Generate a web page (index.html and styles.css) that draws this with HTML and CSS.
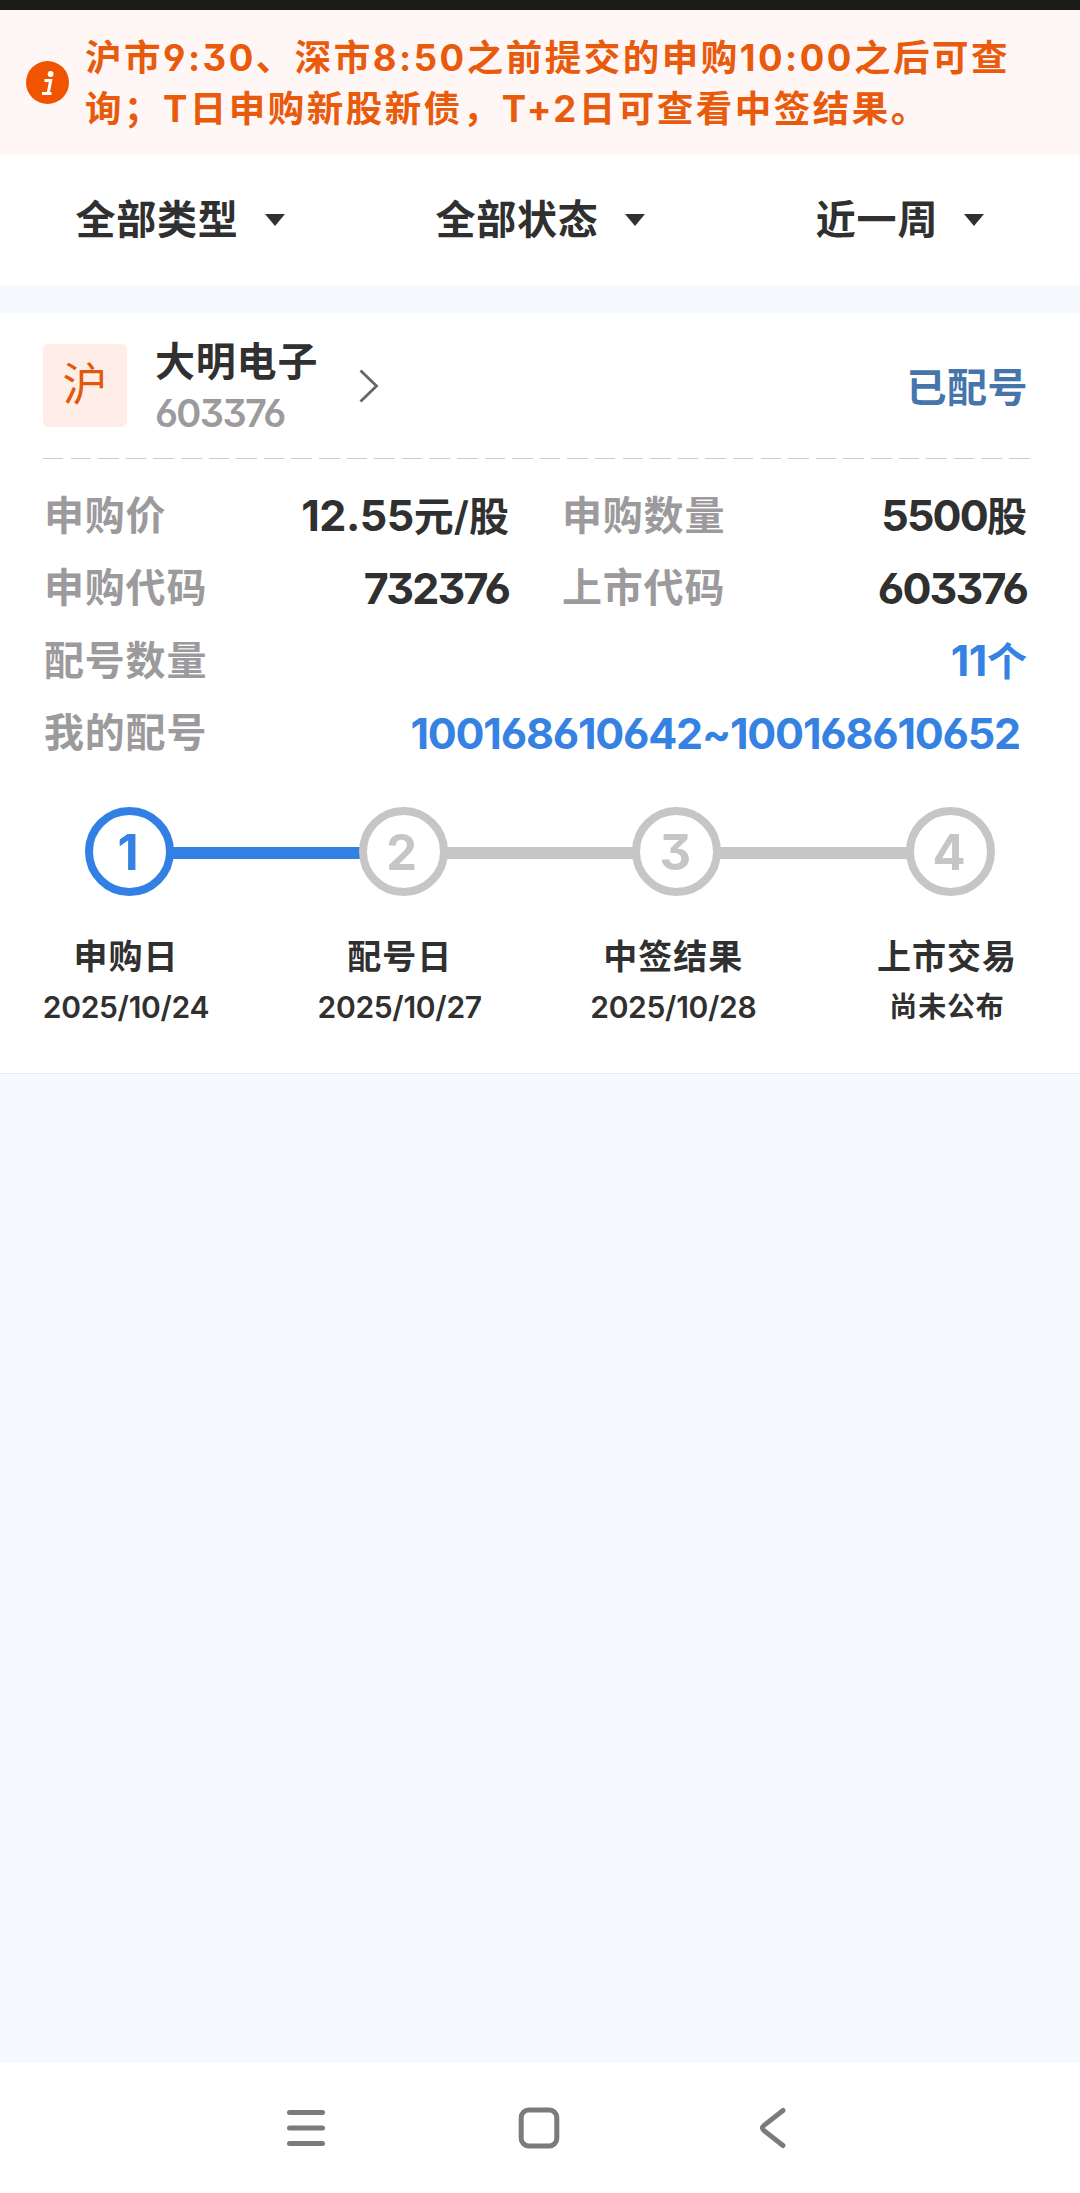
FILE: index.html
```html
<!DOCTYPE html>
<html lang="zh-CN">
<head>
    <meta charset="UTF-8">
    <meta name="viewport" content="width=device-width, initial-scale=1.0">
    <title>申购查询</title>
    <link rel="stylesheet" href="styles.css">
</head>
<body>
    <div class="status-bar"></div>

    <div class="notice">
        <svg class="notice-icon" viewBox="0 0 43 43">
            <circle cx="21.5" cy="21.5" r="21.5" fill="#f05400"/>
            <circle cx="24.6" cy="13" r="2.9" fill="#fff"/>
            <path d="M18.5 19.6h6.2l-2.6 13M16 32.6h9.5" fill="none" stroke="#fff" stroke-width="3"/>
        </svg>
        <p class="notice-text">沪市9:30、深市8:50之前提交的申购10:00之后可查<br>询；T日申购新股新债，T+2日可查看中签结果。</p>
    </div>

    <div class="filters">
        <div class="filter">全部类型<span class="arrow"></span></div>
        <div class="filter">全部状态<span class="arrow"></span></div>
        <div class="filter">近一周<span class="arrow"></span></div>
    </div>

    <main>
        <section class="card">
            <div class="stock">
                <div class="market">沪</div>
                <div class="stock-info">
                    <div class="stock-name">大明电子</div>
                    <div class="stock-code">603376</div>
                </div>
                <svg class="chevron" viewBox="0 0 20 34">
                    <path d="M1.5 1.5L17.5 17L1.5 32.5" fill="none" stroke="#666" stroke-width="2.8"/>
                </svg>
                <div class="stock-status">已配号</div>
            </div>

            <div class="divider"></div>

            <div class="details">
                <div class="row">
                    <span class="label">申购价</span>
                    <span class="value mixed"><span class="num">12.55</span>元/股</span>
                </div>
                <div class="row">
                    <span class="label">申购数量</span>
                    <span class="value"><span class="num">5500</span>股</span>
                </div>
                <div class="row">
                    <span class="label">申购代码</span>
                    <span class="value num">732376</span>
                </div>
                <div class="row">
                    <span class="label">上市代码</span>
                    <span class="value num">603376</span>
                </div>
                <div class="row wide">
                    <span class="label">配号数量</span>
                    <span class="value mixed link"><span class="num">11</span>个</span>
                </div>
                <div class="row wide">
                    <span class="label">我的配号</span>
                    <span class="value link num numbers">100168610642~100168610652</span>
                </div>
            </div>

            <div class="progress">
                <span class="circle active">1</span>
                <span class="line active"></span>
                <span class="circle">2</span>
                <span class="line"></span>
                <span class="circle">3</span>
                <span class="line"></span>
                <span class="circle">4</span>
            </div>

            <div class="steps">
                <div class="step">
                    <div class="step-name">申购日</div>
                    <div class="step-date">2025/10/24</div>
                </div>
                <div class="step">
                    <div class="step-name">配号日</div>
                    <div class="step-date">2025/10/27</div>
                </div>
                <div class="step">
                    <div class="step-name">中签结果</div>
                    <div class="step-date">2025/10/28</div>
                </div>
                <div class="step">
                    <div class="step-name">上市交易</div>
                    <div class="step-date pending">尚未公布</div>
                </div>
            </div>
        </section>
    </main>

    <nav class="nav-bar">
        <svg viewBox="0 0 44 44">
            <path d="M5.5 6.5h33M5.5 22h33M5.5 37.5h33"/>
        </svg>
        <svg viewBox="0 0 44 44">
            <rect x="4.2" y="4" width="35.6" height="36" rx="7.5"/>
        </svg>
        <svg viewBox="0 0 44 44">
            <path d="M33 4.5L14 19.4q-3.2 2.6 0 5.2L33 39.5"/>
        </svg>
    </nav>
</body>
</html>
```

FILE: styles.css
```css
* {
    box-sizing: border-box;
}
body {
    margin: 0;
    min-height: 2193px;
    display: flex;
    flex-direction: column;
    font-family: Inter, "Noto Sans CJK SC", sans-serif;
    font-feature-settings: "cv03", "cv04", "cv09";
    font-weight: 600;
    background: #f6faff;
    color: #303030;
    white-space: nowrap;
}
.status-bar {
    height: 10px;
    background: #191c19;
}
.notice {
    height: 145px;
    display: flex;
    padding: 23px 0 0 26px;
    background: #fff6f6;
    color: #e85a0c;
}
.notice-icon {
    width: 43px;
    height: 43px;
    margin: 28px 16px 0 0;
}
.notice-text {
    margin: 0;
    font-size: 36.5px;
    font-weight: 700;
    line-height: 51px;
    letter-spacing: 2.5px;
}
.filters {
    height: 130px;
    display: grid;
    grid-template-columns: repeat(3, 1fr);
    background: #fff;
}
.filter {
    display: flex;
    align-items: center;
    justify-content: center;
    padding-bottom: 6px;
    font-size: 40px;
    letter-spacing: 0.8px;
}
.arrow {
    margin: 6px 0 0 26px;
    border: 10px solid transparent;
    border-top: 12px solid #303030;
    border-bottom: 0;
}
main {
    flex: 1;
    padding-top: 28px;
}
.card {
    height: 761px;
    padding-top: 24px;
    background: #fff;
    border-bottom: 1px solid #ebebef;
}
.stock {
    display: flex;
    align-items: center;
    height: 97px;
    margin: 0 52px 0 43px;
}
.market {
    width: 84px;
    height: 83px;
    border-radius: 6px;
    background: #ffeee7;
    color: #e0570d;
    font-size: 45px;
    font-weight: 400;
    line-height: 82px;
    text-align: center;
}
.stock-info {
    margin-left: 28px;
    padding-top: 5px;
}
.stock-name {
    font-size: 40px;
    line-height: 50px;
    letter-spacing: 0.8px;
}
.stock-code {
    font-size: 38px;
    line-height: 52px;
    letter-spacing: -1.6px;
    color: #9c9a9c;
}
.chevron {
    width: 20px;
    height: 34px;
    margin-left: 41px;
}
.stock-status {
    margin-left: auto;
    padding-bottom: 1px;
    font-size: 40px;
    letter-spacing: 0.5px;
    color: #4675ab;
}
.divider {
    height: 1px;
    margin: 24px 50px 0 43px;
    background: repeating-linear-gradient(to right, #ccc 0 20.5px, transparent 20.5px 27.6px);
}
.details {
    display: grid;
    grid-template-columns: 465px 465px;
    column-gap: 53px;
    grid-auto-rows: 72.3px;
    margin: 21px 52px 0 44px;
    font-size: 40px;
    line-height: 60px;
}
.row {
    display: flex;
    align-items: center;
    justify-content: space-between;
}
.wide {
    grid-column: span 2;
}
.label {
    color: #9c9a9c;
    letter-spacing: 0.8px;
}
.link {
    color: #3682e2;
}
.num {
    font-size: 43px;
    font-weight: 700;
    letter-spacing: -1.8px;
}
.mixed .num {
    letter-spacing: -0.4px;
}
.numbers {
    margin-right: 7px;
    letter-spacing: -1.2px;
}
.progress {
    display: flex;
    align-items: center;
    margin: 38px 85px 0;
}
.circle {
    width: 89px;
    height: 89px;
    padding-right: 3px;
    border: 8.5px solid #c6c6c6;
    border-radius: 50%;
    color: #c6c6c6;
    font-size: 49px;
    font-weight: 700;
    line-height: 75px;
    text-align: center;
}
.line {
    flex: 1;
    height: 12px;
    margin: 2px -2px 0;
    background: #c6c6c6;
}
.circle.active {
    border-color: #3280e4;
    color: #3682e2;
}
.line.active {
    background: #3280e4;
}
.steps {
    display: flex;
    justify-content: space-between;
    margin: 35px 47px 0 40px;
}
.step {
    width: 172px;
    text-align: center;
}
.step-name {
    font-size: 34px;
    line-height: 52px;
    letter-spacing: 1px;
}
.step-date {
    font-size: 30px;
    line-height: 48px;
    letter-spacing: -0.3px;
}
.pending {
    font-size: 28px;
    letter-spacing: 0.8px;
}
.nav-bar {
    height: 130px;
    display: grid;
    grid-template-columns: repeat(3, 233px);
    justify-content: center;
    justify-items: center;
    align-items: center;
    padding-right: 2px;
    background: #fff;
}
.nav-bar svg {
    width: 44px;
    height: 44px;
    fill: none;
    stroke: #7b7b7d;
    stroke-width: 5;
    stroke-linecap: round;
    stroke-linejoin: round;
}
```
